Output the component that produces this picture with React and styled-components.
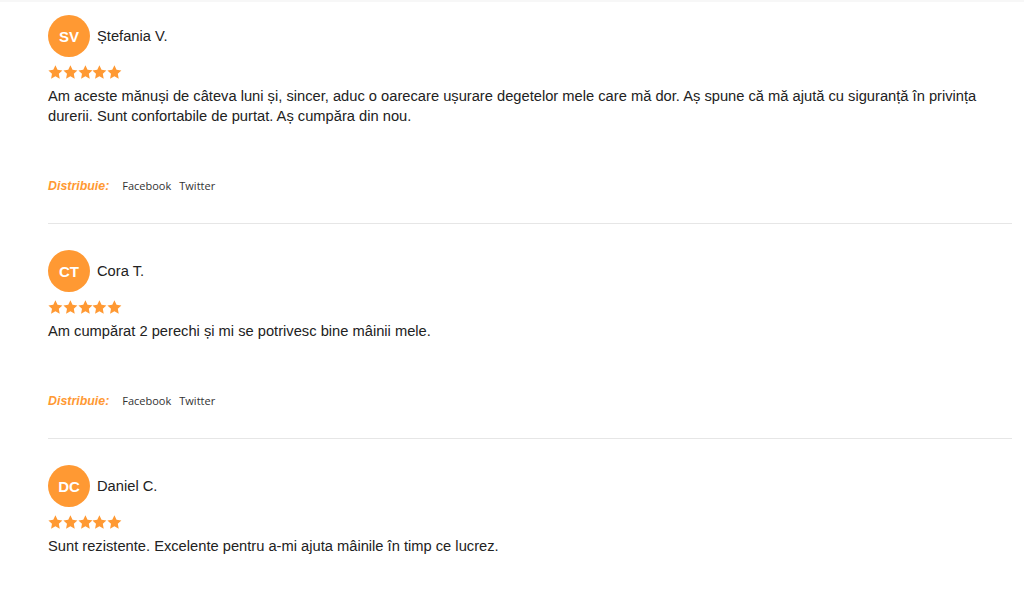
import * as React from 'react';
import styled, { createGlobalStyle } from 'styled-components';

const reviews = [
  {
    initials: 'SV',
    name: 'Ștefania V.',
    text: 'Am aceste mănuși de câteva luni și, sincer, aduc o oarecare ușurare degetelor mele care mă dor. Aș spune că mă ajută cu siguranță în privința durerii. Sunt confortabile de purtat. Aș cumpăra din nou.'
  },
  {
    initials: 'CT',
    name: 'Cora T.',
    text: 'Am cumpărat 2 perechi și mi se potrivesc bine mâinii mele.'
  },
  {
    initials: 'DC',
    name: 'Daniel C.',
    text: 'Sunt rezistente. Excelente pentru a-mi ajuta mâinile în timp ce lucrez.',
    last: true
  }
];

const Star = () => (
  <svg width="14.8" height="14" viewBox="0 0 24 23">
    <path
      d="M12 0.6l3.5 7.3 8 1-5.9 5.6 1.5 7.9L12 18.5l-7.1 3.9 1.5-7.9L.5 8.9l8-1z"
      fill="#ff9933"/>
  </svg>
);

const Review = ({ review }) => (
  <Card $last={ review.last }>
    <Header>
      <Avatar>{review.initials}</Avatar>
      <Name>{review.name}</Name>
    </Header>
    <Stars>
      {[0, 1, 2, 3, 4].map(i => <Star key={ i }/>)}
    </Stars>
    <Body>{review.text}</Body>
    {!review.last && (
      <Share>
        <ShareLabel>Distribuie:</ShareLabel>
        <ShareLink>Facebook</ShareLink>
        <ShareLink>Twitter</ShareLink>
      </Share>
    )}
  </Card>
);

const App = () => (
  <>
    <GlobalStyle/>
    <Page>
      {reviews.map(r => <Review key={ r.initials } review={ r }/>)}
    </Page>
  </>
);

const GlobalStyle = createGlobalStyle`
  html, body {
    margin: 0;
    background: #fff;
    font-family: "Liberation Sans", Arial, sans-serif;
  }
`;

const Page = styled.div`
  border-top: 2px solid #f7f7f7;
  padding: 0 12px 0 48px;
`;

const Card = styled.div`
  padding-top: 13px;
  padding-bottom: ${ p => p.$last ? '40px' : '27px' };
  border-bottom: ${ p => p.$last ? 'none' : '1px solid #e6e6e6' };

  & + & {
    padding-top: 26px;
  }
`;

const Header = styled.div`
  display: flex;
  align-items: center;
  gap: 7px;
`;

const Avatar = styled.div`
  width: 42px;
  height: 42px;
  border-radius: 50%;
  background: #ff9933;
  color: #fff;
  font-weight: bold;
  font-size: 15px;
  display: flex;
  align-items: center;
  justify-content: center;
  flex-shrink: 0;
`;

const Name = styled.div`
  font-size: 14.7px;
  color: #222;
  margin-top: -1px;
`;

const Stars = styled.div`
  display: flex;
  margin-top: 8px;
  height: 14px;
  align-items: center;
`;

const Body = styled.div`
  font-size: 14.7px;
  line-height: 20px;
  color: #222;
  margin-top: 7px;
  min-height: 20px;
`;

const Share = styled.div`
  display: flex;
  align-items: baseline;
  margin-top: 50px;
  line-height: 20px;
`;

const ShareLabel = styled.span`
  color: #ff9933;
  font-weight: bold;
  font-style: italic;
  font-size: 12.4px;
  margin-right: 13px;
`;

const ShareLink = styled.span`
  font-family: "Open Sans", "Noto Sans", sans-serif;
  font-size: 11px;
  color: #333;
  margin-right: 8px;
`;

export default App;
